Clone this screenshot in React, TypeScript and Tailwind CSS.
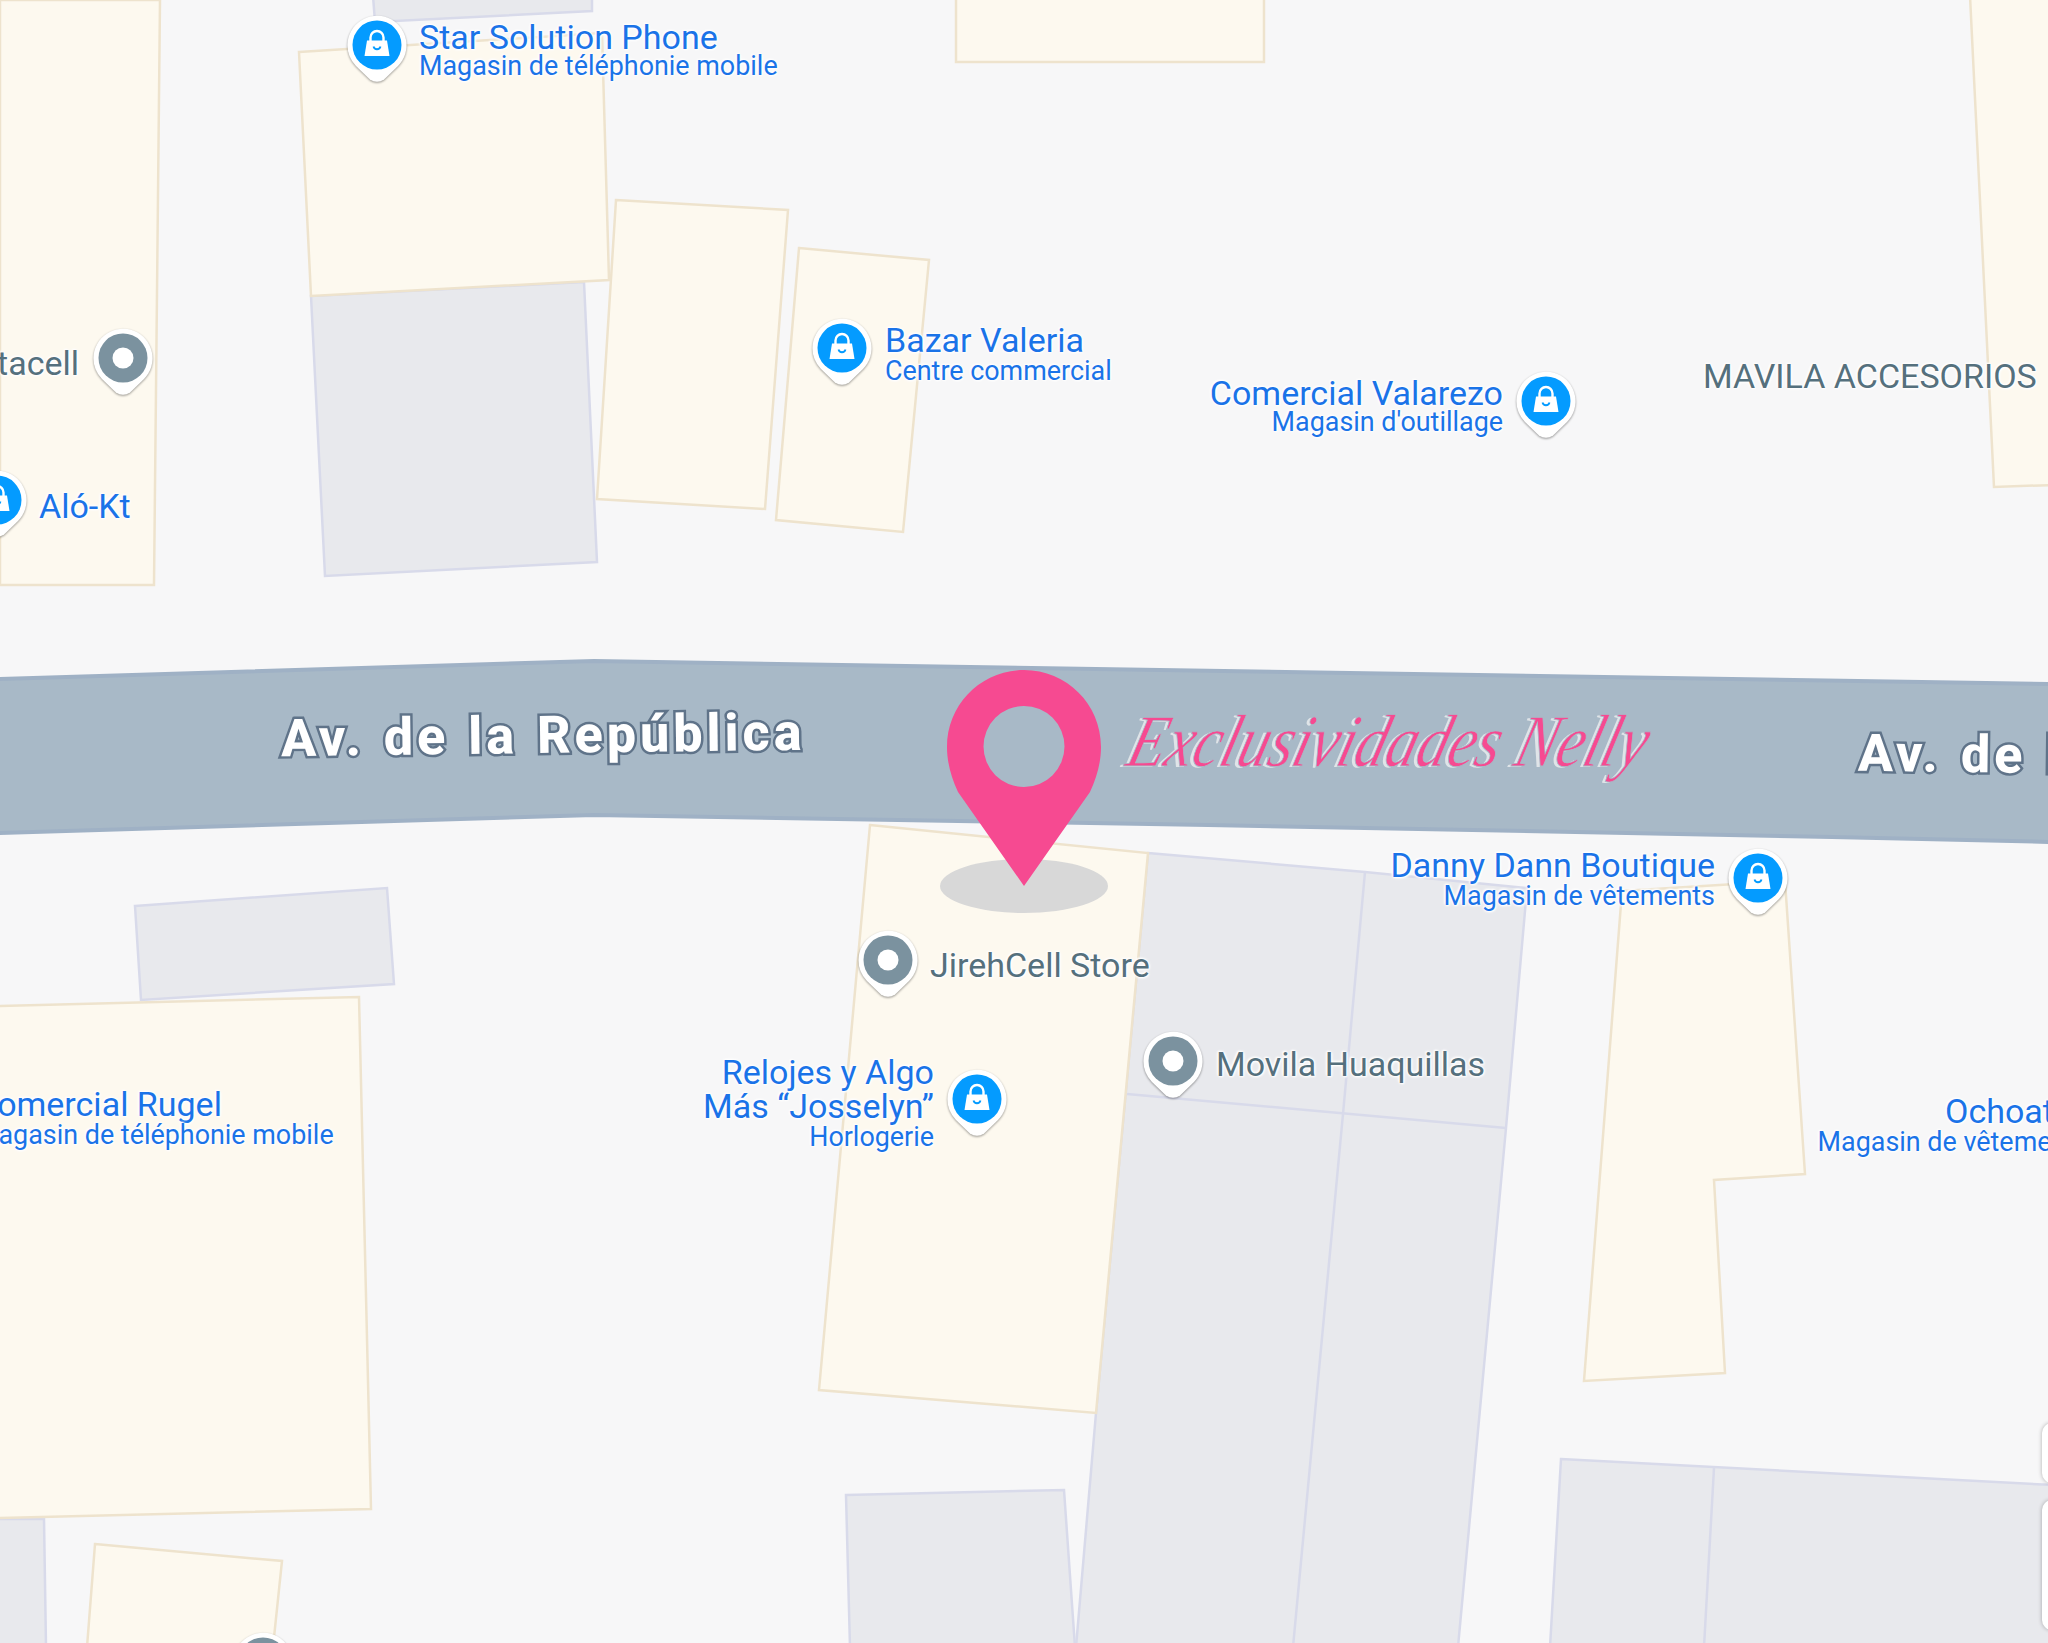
const ROBOTO = "font-['Roboto',sans-serif]";
const HALO = "[text-shadow:0_0_2px_white,0_0_3px_white,0_0_4px_white,1px_1px_2px_white,-1px_-1px_2px_white]";

const cream = [
  "0,0 160,0 154,585 0,585",
  "299,52 602,33 609,280 311,296",
  "616,200 788,210 765,509 597,499",
  "799,248 929,260 903,532 776,520",
  "956,-4 1264,-4 1264,62 956,62",
  "1970,-4 2052,-4 2052,485 1994,487",
  "870,825 1148,853 1096,1413 819,1390",
  "-4,1006 359,997 371,1509 -4,1518",
  "1622,891 1785,881 1805,1174 1714,1180 1725,1373 1584,1381",
  "95,1544 282,1561 273,1647 87,1647",
];

const gray = [
  "311,296 584,282 597,562 325,576",
  "373,-4 592,-4 592,11 375,22",
  "135,906 387,888 394,984 141,1000",
  "1148,853 1365,872 1527,888 1506,1128 1458,1647 1076,1647 1096,1413",
  "846,1495 1064,1490 1075,1647 850,1647",
  "1561,1459 2052,1485 2052,1647 1550,1647",
  "-4,1519 44,1519 46,1647 -4,1647",
];

function BaseMap() {
  return (
    <svg className="absolute inset-0" width="2048" height="1643" viewBox="0 0 2048 1643">
      {gray.map((p) => (
        <polygon key={p} points={p} fill="#e8e9ed" stroke="#d8daea" strokeWidth="2.5" />
      ))}
      <g fill="none" stroke="#d8daea" strokeWidth="2.5">
        <path d="M1365 872 L1343 1114 L1293 1647" />
        <path d="M1127 1094 L1506 1128" />
        <path d="M1714 1468 L1704 1647" />
      </g>
      {cream.map((p) => (
        <polygon key={p} points={p} fill="#fdf9ef" stroke="#eee3cd" strokeWidth="2.5" />
      ))}
      <polygon
        points="-4,679 594,661 2052,684 2052,842 1832,837 1208,825 594,815 -4,833"
        fill="#a8b9c7"
        stroke="#9fb1c5"
        strokeWidth="4"
      />
    </svg>
  );
}

function Marker({ className, kind }: { className: string; kind: "shop" | "place" }) {
  return (
    <svg
      className={`absolute drop-shadow-[0_1px_1px_rgba(0,0,0,0.4)] ${className}`}
      width="64"
      height="72"
      viewBox="-32 -32 64 72"
    >
      <path
        d="M-29.5 0A29.5 29.5 0 1 1 21 21L7 34.5Q0 39-7 34.5L-21 21A29.5 29.5 0 0 1-29.5 0Z"
        fill="#fff"
      />
      {kind === "shop" ? (
        <>
          <circle r="24.5" fill="#049bff" />
          <path
            d="M-6.500-4V-7.500a6.500 6.500 0 0 1 13 0V-4"
            fill="none"
            stroke="#fff"
            strokeWidth="2.400"
          />
          <path d="M-10-4.500H10L12.500 11H-12.500Z" fill="#fff" />
          <path d="M-3.500 1.500a3.600 3.600 0 0 0 7 0" fill="none" stroke="#049bff" strokeWidth="1.800" />
        </>
      ) : (
        <>
          <circle r="24.5" fill="#7b929f" />
          <circle r="10.5" fill="#fff" />
        </>
      )}
    </svg>
  );
}

function Label({
  className,
  title,
  sub,
  end,
  tight,
  tone = "blue",
}: {
  className: string;
  title: string[];
  sub?: string;
  end?: boolean;
  tight?: boolean;
  tone?: "blue" | "gray";
}) {
  return (
    <div
      className={`absolute flex flex-col whitespace-nowrap ${ROBOTO} ${HALO} ${end ? "items-end" : "items-start"} ${
        tone === "blue" ? "text-[#1a73e8]" : "text-[#55707d]"
      } ${className}`}
    >
      {title.map((t) => (
        <span key={t} className="text-[34px] leading-[34px]">
          {t}
        </span>
      ))}
      {sub && <span className={`text-[26.9px] leading-[28px] ${tight ? "-mt-[2px]" : ""}`}>{sub}</span>}
    </div>
  );
}

function RoadName({ className, children }: { className: string; children: string }) {
  return (
    <div
      className={`absolute whitespace-nowrap ${ROBOTO} text-[52px] leading-[60px] font-extrabold tracking-[4px] [word-spacing:2px] text-white [-webkit-text-stroke:5px_#5f7389] [paint-order:stroke_fill] ${className}`}
    >
      {children}
    </div>
  );
}

export default function App() {
  return (
    <div className="relative w-[2048px] h-[1643px] overflow-hidden bg-[#f7f7f8]">
      <BaseMap />

      {/* road names */}
      <RoadName className="left-[281px] top-[706px] -rotate-[0.7deg]">Av. de la República</RoadName>
      <RoadName className="left-[1858px] top-[727px] rotate-[0.7deg]">Av. de la República</RoadName>

      {/* place labels */}
      <Label className="left-[419px] top-[20px]" tight title={["Star Solution Phone"]} sub="Magasin de téléphonie mobile" />
      <Label className="right-[1969px] top-[346px]" end tone="gray" title={["tacell"]} />
      <Label className="left-[39px] top-[489px]" title={["Aló-Kt"]} />
      <Label className="left-[885px] top-[323px]" title={["Bazar Valeria"]} sub="Centre commercial" />
      <Label className="right-[545px] top-[376px]" end tight title={["Comercial Valarezo"]} sub="Magasin d'outillage" />
      <Label className="left-[1703px] top-[359px]" tone="gray" title={["MAVILA ACCESORIOS"]} />
      <Label className="right-[333px] top-[848px]" end title={["Danny Dann Boutique"]} sub="Magasin de vêtements" />
      <Label className="left-[930px] top-[948px]" tone="gray" title={["JirehCell Store"]} />
      <Label className="left-[1216px] top-[1047px]" tone="gray" title={["Movila Huaquillas"]} />
      <Label className="right-[1114px] top-[1055px]" end title={["Relojes y Algo", "Más “Josselyn”"]} sub="Horlogerie" />
      <Label className="left-[-25px] top-[1087px]" title={["Comercial Rugel"]} sub="Magasin de téléphonie mobile" />
      <Label className="right-[-41px] top-[1094px]" end title={["Ochoatila"]} sub="Magasin de vêtements" />

      {/* place markers */}
      <Marker className="left-[345px] top-[13px]" kind="shop" />
      <Marker className="left-[810px] top-[316px]" kind="shop" />
      <Marker className="left-[1514px] top-[369px]" kind="shop" />
      <Marker className="left-[91px] top-[326px]" kind="place" />
      <Marker className="left-[-35px] top-[468px]" kind="shop" />
      <Marker className="left-[1726px] top-[846px]" kind="shop" />
      <Marker className="left-[856px] top-[928px]" kind="place" />
      <Marker className="left-[945px] top-[1067px]" kind="shop" />
      <Marker className="left-[1141px] top-[1029px]" kind="place" />
      <Marker className="left-[231px] top-[1630px]" kind="place" />

      {/* main pin */}
      <div className="absolute left-[940px] top-[859px] w-[168px] h-[54px] rounded-[50%] bg-[#d8d8d8]" />
      <svg className="absolute left-[947px] top-[670px]" width="154" height="216" viewBox="0 0 154 216">
        <path
          fillRule="evenodd"
          d="M77 0C119.500 0 154 34 154 77C154 92 150 107 143 122L77 216L11 122C4 107 0 92 0 77C0 34 34.500 0 77 0ZM77 36A40.500 40.500 0 1 0 77 117A40.500 40.500 0 1 0 77 36Z"
          fill="#f64a91"
        />
      </svg>
      <div className="absolute left-[1116px] top-[705px] whitespace-nowrap font-['Liberation_Serif',serif] italic text-[62px] leading-[90px] -skew-x-[18deg] scale-y-[1.2] origin-bottom text-[#f64a91] [-webkit-text-stroke:0.7px_#a8b9c7] [text-shadow:-3px_1px_0_#dfe4e8]">
        Exclusividades Nelly
      </div>

      {/* map controls at the edge */}
      <div className="absolute left-[2042px] top-[1423px] w-[20px] h-[60px] rounded-[10px] bg-white shadow-[0_0_4px_rgba(0,0,0,0.3)]" />
      <div className="absolute left-[2042px] top-[1500px] w-[20px] h-[130px] rounded-[10px] bg-white shadow-[0_0_4px_rgba(0,0,0,0.3)]" />
    </div>
  );
}
